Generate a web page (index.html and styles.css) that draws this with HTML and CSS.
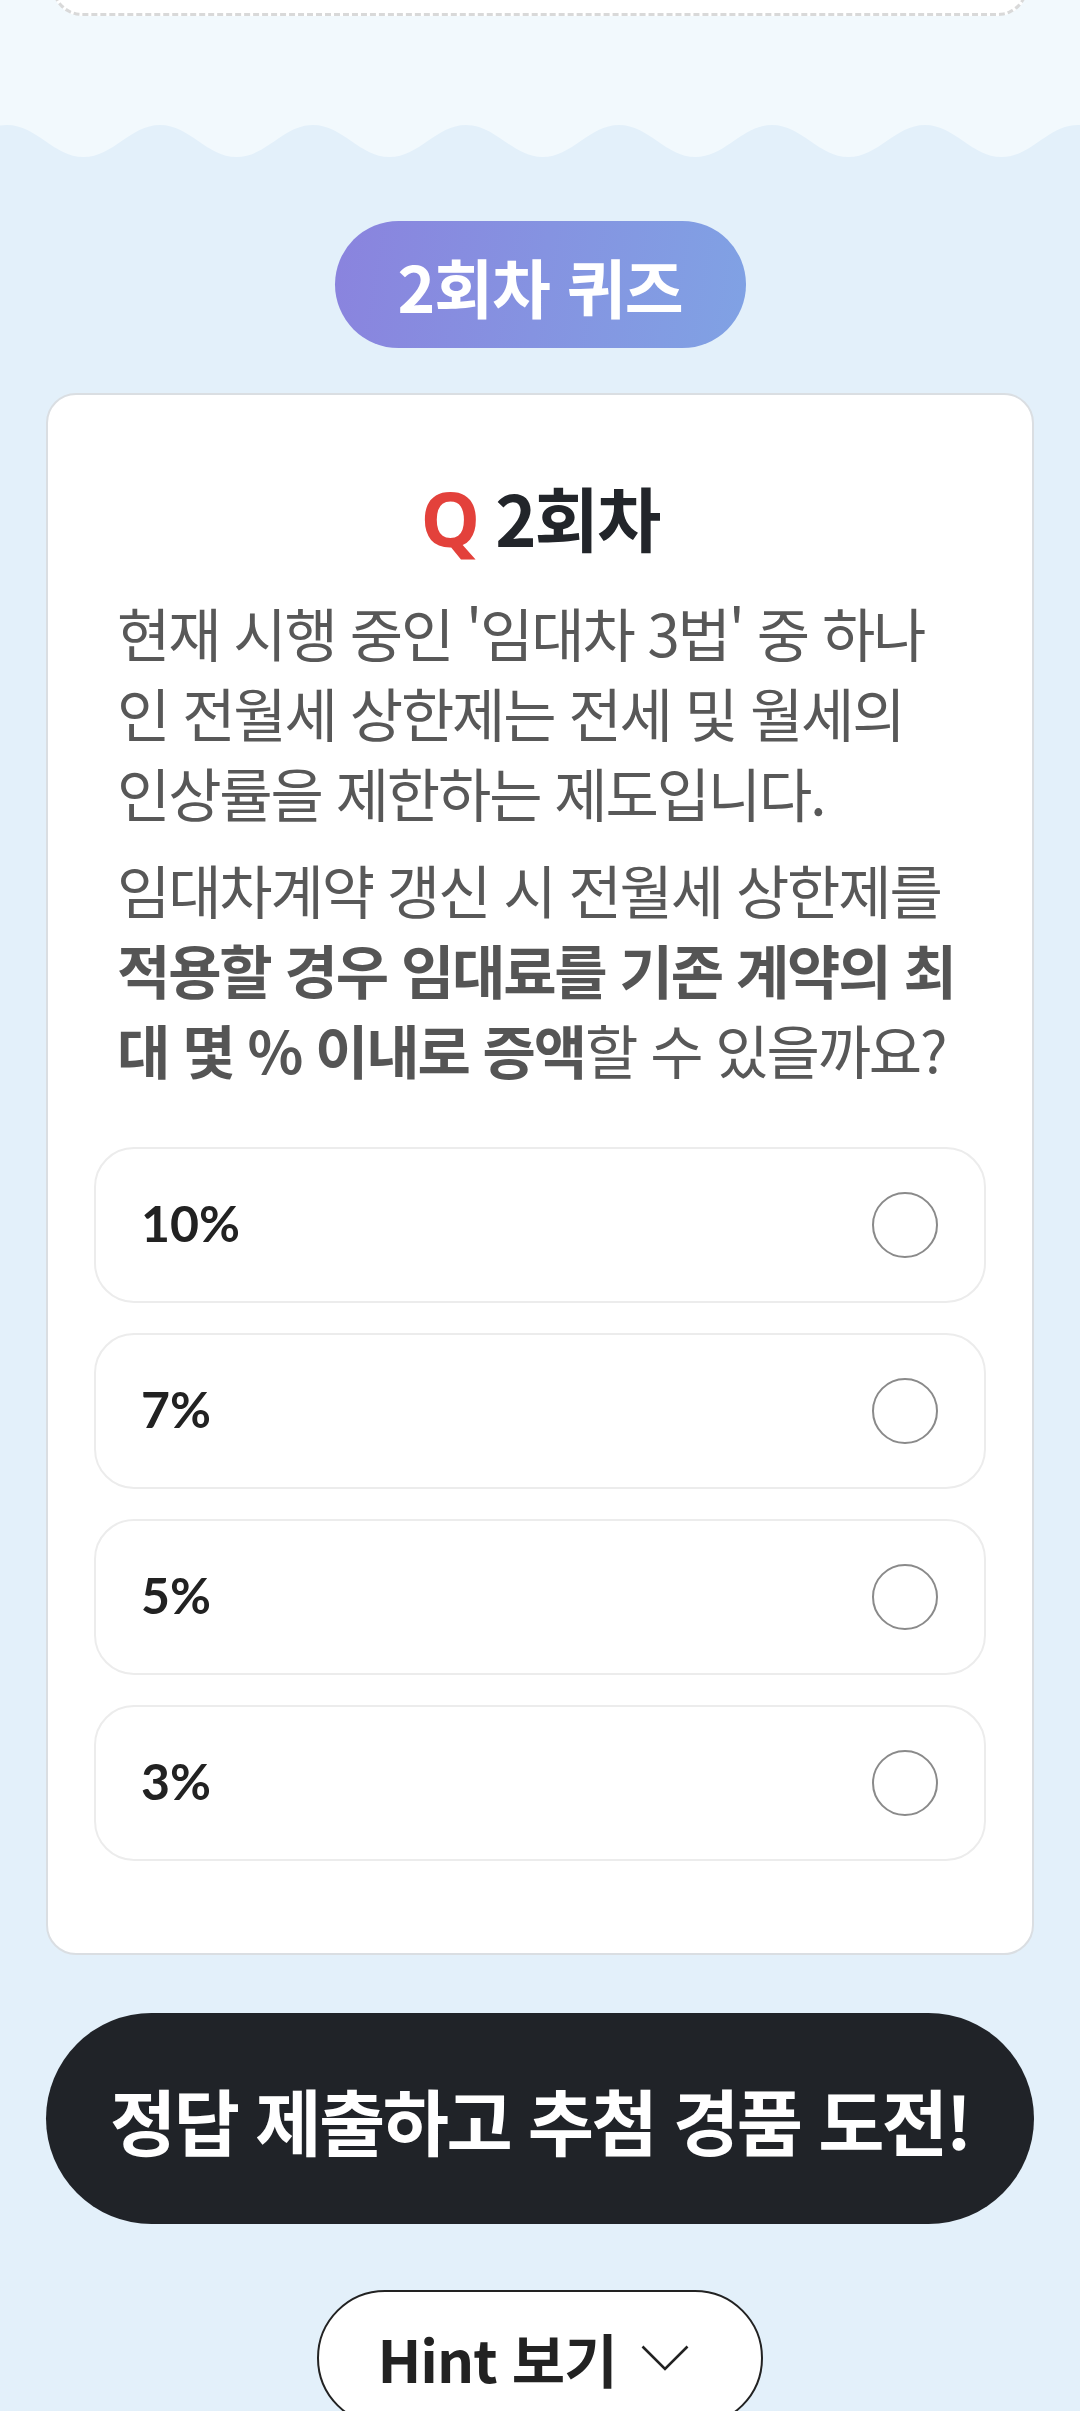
FILE: index.html
```html
<!DOCTYPE html>
<html lang="ko">
<head>
<meta charset="utf-8">
<title>2회차 퀴즈</title>
<link rel="stylesheet" href="styles.css">
</head>
<body>
<div class="page">
  <header class="top">
    <div class="ticket"></div>
  </header>
  <svg class="wave" viewBox="0 0 1080 40" preserveAspectRatio="none" aria-hidden="true">
    <path fill="#e3f0fa" d="M-146 5c30 0 46.5 32 76.5 32s46.5 -32 76.5 -32s46.5 32 76.5 32s46.5 -32 76.5 -32s46.5 32 76.5 32s46.5 -32 76.5 -32s46.5 32 76.5 32s46.5 -32 76.5 -32s46.5 32 76.5 32s46.5 -32 76.5 -32s46.5 32 76.5 32s46.5 -32 76.5 -32s46.5 32 76.5 32s46.5 -32 76.5 -32s46.5 32 76.5 32s46.5 -32 76.5 -32s46.5 32 76.5 32V40H-146Z"/>
  </svg>
  <main class="main">
    <div class="badge">2회차 퀴즈</div>
    <section class="card">
      <h2 class="q-title"><span class="q">Q</span><span class="round">2회차</span></h2>
      <p class="desc">현재 시행 중인 '임대차 3법' 중 하나<br>인 전월세 상한제는 전세 및 월세의<br>인상률을 제한하는 제도입니다.</p>
      <p class="desc">임대차계약 갱신 시 전월세 상한제를<br><b>적용할 경우 임대료를 기존 계약의 최<br>대 몇 % 이내로 증액</b>할 수 있을까요?</p>
      <ul class="options">
        <li class="option"><span class="opt-label">10%</span><span class="radio"></span></li>
        <li class="option"><span class="opt-label">7%</span><span class="radio"></span></li>
        <li class="option"><span class="opt-label">5%</span><span class="radio"></span></li>
        <li class="option"><span class="opt-label">3%</span><span class="radio"></span></li>
      </ul>
    </section>
    <button class="submit" type="button">정답 제출하고 추첨 경품 도전!</button>
    <button class="hint" type="button"><span>Hint 보기</span>
      <svg class="chev" viewBox="0 0 48 26" aria-hidden="true"><polyline points="1.5,1.5 24,24 46.5,1.5" fill="none" stroke="#222" stroke-width="2.6"/></svg>
    </button>
  </main>
</div>
</body>
</html>
```

FILE: styles.css
```css
* { box-sizing: border-box; }

html, body {
  margin: 0;
  padding: 0;
}

body {
  background: #e3f0fa;
  font-family: "Noto Sans CJK KR", "Noto Sans", sans-serif;
  overflow: hidden;
}

.page {
  width: 1080px;
}

.top {
  height: 120px;
  background: #f2f9fd;
  padding: 0 52px;
  overflow: hidden;
}

.ticket {
  height: 60px;
  margin-top: -44px;
  background: #ffffff;
  border: 3px dashed #d9d9d9;
  border-top: none;
  border-radius: 0 0 30px 30px;
}

.wave {
  display: block;
  width: 1080px;
  height: 40px;
  background: #f2f9fd;
}

.main {
  padding: 61px 0 60px;
  display: flex;
  flex-direction: column;
  align-items: center;
}

.badge {
  width: 411px;
  height: 127px;
  border-radius: 64px;
  background: linear-gradient(100deg, #8a83de 0%, #8593e1 50%, #80a2e4 100%);
  color: #ffffff;
  font-size: 64px;
  font-weight: 700;
  letter-spacing: -1px;
  display: flex;
  align-items: center;
  justify-content: center;
}

.card {
  width: 988px;
  margin-top: 45px;
  background: #ffffff;
  border: 2px solid #dadee2;
  border-radius: 30px;
  padding: 82px 46px 92px;
}

.q-title {
  margin: 0 0 35px;
  height: 80px;
  display: flex;
  justify-content: center;
  align-items: baseline;
  gap: 15px;
  font-size: 70px;
  line-height: 80px;
  font-weight: 700;
  color: #22252a;
}

.q {
  color: #e3413b;
  font-family: "Open Sans", "Noto Sans", sans-serif;
  font-size: 75px;
  font-weight: 700;
  line-height: 80px;
}

.round {
  letter-spacing: -2px;
  line-height: 80px;
}

.desc {
  margin: 0 23px 17px;
  font-size: 58px;
  line-height: 80px;
  color: #585858;
  letter-spacing: -2.2px;
  white-space: nowrap;
}

.desc b {
  font-weight: 700;
  color: #555555;
}

.options {
  list-style: none;
  margin: 58px 0 0;
  padding: 0;
  display: flex;
  flex-direction: column;
  gap: 30px;
}

.option {
  height: 156px;
  border: 2px solid #ececec;
  border-radius: 40px;
  padding: 0 46px 0 45px;
  display: flex;
  align-items: center;
  justify-content: space-between;
}

.opt-label {
  font-family: Lato, "Noto Sans", sans-serif;
  font-weight: 700;
  font-size: 50px;
  line-height: 1;
  padding-bottom: 4px;
  color: #222222;
}

.radio {
  width: 66px;
  height: 66px;
  border: 2px solid #8a8a8a;
  border-radius: 50%;
}

.submit {
  width: 988px;
  height: 211px;
  margin-top: 58px;
  border: none;
  border-radius: 106px;
  background: #202328;
  color: #ffffff;
  font-family: "Noto Sans CJK KR", "Noto Sans", sans-serif;
  font-size: 72px;
  font-weight: 700;
  letter-spacing: -2.5px;
  display: flex;
  align-items: center;
  justify-content: center;
  padding: 0;
}

.hint {
  width: 446px;
  height: 136px;
  margin-top: 66px;
  border: 2.5px solid #222222;
  border-radius: 68px;
  background: #ffffff;
  color: #222222;
  font-family: "Noto Sans CJK KR", "Noto Sans", sans-serif;
  font-size: 58px;
  font-weight: 700;
  letter-spacing: -1px;
  display: flex;
  align-items: center;
  justify-content: center;
  gap: 24px;
  padding: 0 14px 0 0;
}

.chev {
  width: 48px;
  height: 26px;
  display: block;
}
```
